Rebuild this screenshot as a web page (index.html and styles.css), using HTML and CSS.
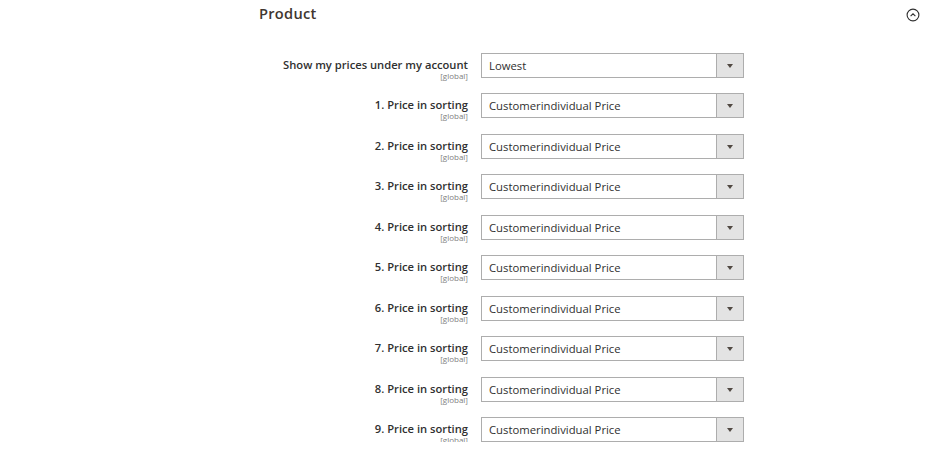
FILE: index.html
```html
<!DOCTYPE html>
<html>
<head>
<meta charset="utf-8">
<link rel="stylesheet" href="styles.css">
</head>
<body>
<section class="section">
  <div class="section-head">
    <h2 class="section-title">Product</h2>
    <span class="collapse-icon">
      <svg width="14" height="14" viewBox="0 0 14 14"><circle cx="7" cy="7" r="5.9" fill="none" stroke="#303030" stroke-width="1.1"/><path d="M4.6 8.2 L7 5.8 L9.4 8.2" fill="none" stroke="#303030" stroke-width="1.1"/></svg>
    </span>
  </div>
  <div class="fields">
    <div class="row"><div class="label"><span class="label-text">Show my prices under my account</span><span class="scope">[global]</span></div><div class="select"><span class="select-value">Lowest</span><span class="select-btn"><span class="arrow"></span></span></div></div>
    <div class="row"><div class="label"><span class="label-text">1. Price in sorting</span><span class="scope">[global]</span></div><div class="select"><span class="select-value">Customerindividual Price</span><span class="select-btn"><span class="arrow"></span></span></div></div>
    <div class="row"><div class="label"><span class="label-text">2. Price in sorting</span><span class="scope">[global]</span></div><div class="select"><span class="select-value">Customerindividual Price</span><span class="select-btn"><span class="arrow"></span></span></div></div>
    <div class="row"><div class="label"><span class="label-text">3. Price in sorting</span><span class="scope">[global]</span></div><div class="select"><span class="select-value">Customerindividual Price</span><span class="select-btn"><span class="arrow"></span></span></div></div>
    <div class="row"><div class="label"><span class="label-text">4. Price in sorting</span><span class="scope">[global]</span></div><div class="select"><span class="select-value">Customerindividual Price</span><span class="select-btn"><span class="arrow"></span></span></div></div>
    <div class="row"><div class="label"><span class="label-text">5. Price in sorting</span><span class="scope">[global]</span></div><div class="select"><span class="select-value">Customerindividual Price</span><span class="select-btn"><span class="arrow"></span></span></div></div>
    <div class="row"><div class="label"><span class="label-text">6. Price in sorting</span><span class="scope">[global]</span></div><div class="select"><span class="select-value">Customerindividual Price</span><span class="select-btn"><span class="arrow"></span></span></div></div>
    <div class="row"><div class="label"><span class="label-text">7. Price in sorting</span><span class="scope">[global]</span></div><div class="select"><span class="select-value">Customerindividual Price</span><span class="select-btn"><span class="arrow"></span></span></div></div>
    <div class="row"><div class="label"><span class="label-text">8. Price in sorting</span><span class="scope">[global]</span></div><div class="select"><span class="select-value">Customerindividual Price</span><span class="select-btn"><span class="arrow"></span></span></div></div>
    <div class="row"><div class="label"><span class="label-text">9. Price in sorting</span><span class="scope">[global]</span></div><div class="select"><span class="select-value">Customerindividual Price</span><span class="select-btn"><span class="arrow"></span></span></div></div>
  </div>
</section>
</body>
</html>
```
FILE: styles.css
```css
html, body {
  margin: 0;
  padding: 0;
  background: #ffffff;
}
body {
  font-family: "Open Sans", "Liberation Sans", sans-serif;
  color: #303030;
}
.section {
  margin-left: 259px;
  width: 662px;
}
.section-head {
  display: flex;
  justify-content: space-between;
  align-items: center;
  height: 29px;
}
.section-title {
  margin: 0 0 4px 0;
  font-size: 14.6px;
  font-weight: 600;
  color: #41362f;
  letter-spacing: 0.3px;
  line-height: 20px;
}
.collapse-icon {
  display: flex;
  margin-right: 1px;
}
.fields {
  display: flex;
  flex-direction: column;
  gap: 15.5px;
  padding-top: 23.5px;
}
.row {
  display: flex;
  gap: 13px;
  height: 25px;
}
.label {
  width: 209px;
  display: flex;
  flex-direction: column;
  align-items: flex-end;
  padding-top: 4px;
}
.label-text {
  font-size: 11.2px;
  font-weight: 600;
  line-height: 15px;
  color: #303030;
  white-space: nowrap;
}
.scope {
  font-size: 8px;
  line-height: 9px;
  color: #808080;
  margin-top: -1px;
}
.select {
  width: 263px;
  height: 25px;
  box-sizing: border-box;
  border: 1px solid #adadad;
  display: flex;
  align-items: stretch;
  background: #fff;
}
.select-value {
  flex: 1;
  display: flex;
  align-items: center;
  padding-left: 7px;
  font-size: 11.3px;
  color: #303030;
}
.select-btn {
  width: 26px;
  border-left: 1px solid #adadad;
  background: #e3e3e3;
  display: flex;
  align-items: center;
  justify-content: center;
}
.arrow {
  width: 0;
  height: 0;
  border-left: 3px solid transparent;
  border-right: 3px solid transparent;
  border-top: 4px solid #514943;
  margin-top: 1px;
}
```
